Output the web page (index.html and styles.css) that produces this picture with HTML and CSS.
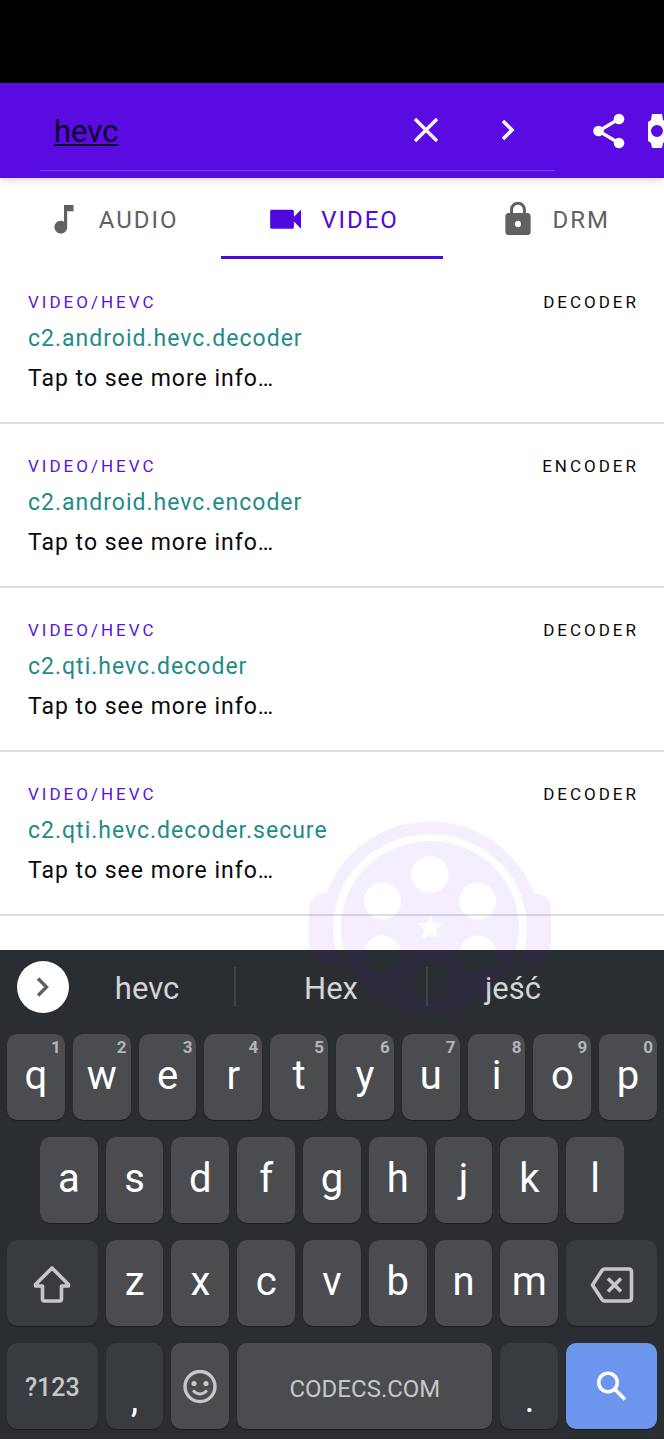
FILE: index.html
```
<!DOCTYPE html>
<html lang="en">
<head>
<meta charset="utf-8">
<meta name="viewport" content="width=device-width, initial-scale=1">
<title>Codec Info</title>
<link rel="stylesheet" href="styles.css">
</head>
<body>
<div class="status-bar"></div>
<header class="app-bar">
  <form class="search">
    <input class="search-input" type="text" value="hevc" aria-label="Search codecs">
    <button class="icon-button" type="button" aria-label="Clear"><svg width="32" height="32" viewBox="0 0 32 32"><path d="M4 4 26 26M26 4 4 26" fill="none" stroke="#fff" stroke-width="3.200"/></svg></button>
    <button class="icon-button" type="submit" aria-label="Submit"><svg width="32" height="32" viewBox="0 0 32 32"><path d="M11 6l9 9-9 9" fill="none" stroke="#fff" stroke-width="3.500"/></svg></button>
  </form>
  <div class="actions">
    <button class="action" type="button" aria-label="Share"><svg width="32" height="36" viewBox="0 0 32 36"><g fill="#fff"><circle cx="5.500" cy="18" r="5.300"/><circle cx="26" cy="6" r="5.300"/><circle cx="26" cy="30" r="5.300"/></g><path d="M26 6 5.500 18 26 30" fill="none" stroke="#fff" stroke-width="3.200"/></svg></button>
    <button class="action" type="button" aria-label="Watch"><svg width="18" height="36" viewBox="0 0 18 36"><path fill="#fff" fill-rule="evenodd" d="M4 1h10l1 6 3 2v19l-3 2-1 5H4l-1-5-3-2V9l3-2zM9 12a6 6 0 1 0 0 12 6 6 0 0 0 0-12z"/></svg></button>
  </div>
</header>
<nav class="tabs">
  <button class="tab" type="button"><svg width="38" height="38" viewBox="0 0 24 24"><path fill="currentColor" d="M12 2.500v10.550c-.59-.34-1.270-.55-2-.55-2.210 0-4 1.790-4 4s1.790 4 4 4 4-1.790 4-4V6.500h4v-4h-6z"/></svg>AUDIO</button>
  <button class="tab tab-active" type="button"><svg width="38" height="38" viewBox="0 0 24 24"><path fill="currentColor" d="M17 10V6.500c0-.55-.45-1-1-1H3c-.55 0-1 .45-1 1v10c0 .55.45 1 1 1h13c.55 0 1-.45 1-1V13l4.500 4.500v-12L17 10z"/></svg>VIDEO</button>
  <button class="tab" type="button"><svg width="38" height="38" viewBox="0 0 24 24"><path fill="currentColor" d="M18 7.500h-1v-2c0-2.760-2.240-5-5-5s-5 2.240-5 5v2H6c-1.100 0-2 .9-2 2v10c0 1.100.9 2 2 2h12c1.100 0 2-.9 2-2v-10c0-1.100-.9-2-2-2zm-6 9c-1.100 0-2-.9-2-2s.9-2 2-2 2 .9 2 2-.9 2-2 2zm3.100-9H8.900v-2c0-1.710 1.390-3.100 3.100-3.100s3.100 1.390 3.100 3.100v2z"/></svg>DRM</button>
</nav>
<main class="codecs">
  <article class="codec">
    <div class="codec-head"><span class="mime">VIDEO/HEVC</span><span>DECODER</span></div>
    <h2 class="codec-name">c2.android.hevc.decoder</h2>
    <p class="codec-hint">Tap to see more info…</p>
  </article>
  <article class="codec">
    <div class="codec-head"><span class="mime">VIDEO/HEVC</span><span>ENCODER</span></div>
    <h2 class="codec-name">c2.android.hevc.encoder</h2>
    <p class="codec-hint">Tap to see more info…</p>
  </article>
  <article class="codec">
    <div class="codec-head"><span class="mime">VIDEO/HEVC</span><span>DECODER</span></div>
    <h2 class="codec-name">c2.qti.hevc.decoder</h2>
    <p class="codec-hint">Tap to see more info…</p>
  </article>
  <article class="codec">
    <div class="codec-head"><span class="mime">VIDEO/HEVC</span><span>DECODER</span></div>
    <h2 class="codec-name">c2.qti.hevc.decoder.secure</h2>
    <p class="codec-hint">Tap to see more info…</p>
  </article>
</main>
<section class="keyboard" aria-label="Keyboard">
  <div class="suggestions">
    <button class="expand" type="button" aria-label="Expand"><svg width="32" height="32" viewBox="0 0 32 32"><path d="M11 7.500 19.500 16 11 24.500" fill="none" stroke="#5f6062" stroke-width="3.400"/></svg></button>
    <button class="suggestion" type="button">hevc</button>
    <button class="suggestion" type="button">Hex</button>
    <button class="suggestion" type="button">jeść</button>
  </div>
  <svg class="reel" width="242" height="192" viewBox="309 822 242 192" aria-hidden="true">
    <g fill="#6200ff" fill-opacity=".068" fill-rule="evenodd">
      <path d="M340 962H327Q309 962 309 944V911Q309 894 326.700 893A109 105 0 0 1 533.300 893Q551 894 551 911V944Q551 962 533 962H520A97 93 0 1 0 340 962Z"/>
      <path d="M341 927a89 86 0 1 0 178 0a89 86 0 1 0-178 0zM411.500 874.500a18.500 18.500 0 1 0 37 0a18.500 18.500 0 1 0-37 0zM364 901a18.500 18.500 0 1 0 37 0a18.500 18.500 0 1 0-37 0zM459 901a18.500 18.500 0 1 0 37 0a18.500 18.500 0 1 0-37 0zM364 954a18.500 18.500 0 1 0 37 0a18.500 18.500 0 1 0-37 0zM459 954a18.500 18.500 0 1 0 37 0a18.500 18.500 0 1 0-37 0zM411.500 981a18.500 18.500 0 1 0 37 0a18.500 18.500 0 1 0-37 0zM430.300 914.500l3.400 8.500 9.600.6-7.300 6 2.400 9.400-8.100-5-8.100 5 2.400-9.400-7.300-6 9.600-.6z"/>
    </g>
  </svg>
  <div class="keys">
    <button class="key" type="button">q<sup class="alt">1</sup></button>
    <button class="key" type="button">w<sup class="alt">2</sup></button>
    <button class="key" type="button">e<sup class="alt">3</sup></button>
    <button class="key" type="button">r<sup class="alt">4</sup></button>
    <button class="key" type="button">t<sup class="alt">5</sup></button>
    <button class="key" type="button">y<sup class="alt">6</sup></button>
    <button class="key" type="button">u<sup class="alt">7</sup></button>
    <button class="key" type="button">i<sup class="alt">8</sup></button>
    <button class="key" type="button">o<sup class="alt">9</sup></button>
    <button class="key" type="button">p<sup class="alt">0</sup></button>
    <button class="key key-indent" type="button">a</button>
    <button class="key" type="button">s</button>
    <button class="key" type="button">d</button>
    <button class="key" type="button">f</button>
    <button class="key" type="button">g</button>
    <button class="key" type="button">h</button>
    <button class="key" type="button">j</button>
    <button class="key" type="button">k</button>
    <button class="key" type="button">l</button>
    <button class="key key-wide key-dark key-icon" type="button" aria-label="Shift"><svg width="40" height="40" viewBox="0 0 40 40"><path d="M20 3 3.500 19.500V21H10.500V34Q10.500 36 12.500 36H27.500Q29.500 36 29.500 34V21H36.500V19.500Z" fill="none" stroke="#c6c7c9" stroke-width="3.600" stroke-linejoin="round"/></svg></button>
    <button class="key" type="button">z</button>
    <button class="key" type="button">x</button>
    <button class="key" type="button">c</button>
    <button class="key" type="button">v</button>
    <button class="key" type="button">b</button>
    <button class="key" type="button">n</button>
    <button class="key" type="button">m</button>
    <button class="key key-wide key-dark key-icon" type="button" aria-label="Backspace"><svg width="44" height="36" viewBox="0 0 44 36"><path d="M2.500 18 12 3.500Q13 2 14.800 2H38.500Q41.500 2 41.500 5V31Q41.500 34 38.500 34H14.800Q13 34 12 32.500ZM18 11.500l13 13M31 11.500l-13 13" fill="none" stroke="#c6c7c9" stroke-width="3.600" stroke-linejoin="round"/></svg></button>
    <button class="key key-wide key-dark key-mode" type="button">?123</button>
    <button class="key key-dark key-punct" type="button">,</button>
    <button class="key key-icon" type="button" aria-label="Emoji"><svg width="36" height="36" viewBox="0 0 36 36"><g fill="none" stroke="#c6c7c9"><circle cx="18" cy="16.500" r="15" stroke-width="3.400"/><path d="M11 20.500q7 7 14 0" stroke-width="3"/></g><g fill="#c6c7c9"><circle cx="12" cy="13.500" r="2.600"/><circle cx="24" cy="13.500" r="2.600"/></g></svg></button>
    <button class="key key-space" type="button">CODECS.COM</button>
    <button class="key key-dark key-punct" type="button">.</button>
    <button class="key key-wide key-search" type="button" aria-label="Search"><svg width="32" height="32" viewBox="0 0 32 32"><g fill="none" stroke="#fff" stroke-width="3.600"><circle cx="12" cy="12.500" r="9.300"/><path d="M18.500 19 29 29.500"/></g></svg></button>
  </div>
</section>
</body>
</html>
```
FILE: styles.css
```
* {
  box-sizing: border-box;
}

body {
  margin: 0;
  background: #fff;
  color: #0a0a0a;
  font-family: Roboto, "Noto Sans", sans-serif;
  overflow-x: hidden;
}

button,
input {
  margin: 0;
  padding: 0;
  border: 0;
  background: none;
  color: inherit;
  font: inherit;
}

svg {
  display: block;
  flex: none;
}

.status-bar {
  height: 83px;
  background: #000;
}

.app-bar {
  display: flex;
  height: 95px;
  padding-left: 40px;
  background: #5a0be2;
  box-shadow: 0 1px 8px rgba(0, 0, 0, 0.2);
}

.search {
  display: flex;
  flex: 1;
  align-items: center;
  min-width: 0;
  height: 88px;
  padding: 9px 7px 0 14px;
  border-bottom: 1px solid #7a3fe8;
}

.search-input {
  flex: 1;
  min-width: 0;
  padding-top: 2px;
  color: #0c0326;
  font-size: 31px;
  line-height: 40px;
  text-decoration: underline;
  text-decoration-thickness: 2px;
  text-underline-offset: 2px;
  outline: 0;
}

.icon-button {
  display: flex;
  justify-content: center;
  width: 81px;
}

.actions {
  display: flex;
  align-items: center;
  gap: 23px;
  width: 109px;
  padding-left: 38px;
  overflow: hidden;
}

.action {
  flex: none;
}

.tabs {
  display: grid;
  grid-template-columns: repeat(3, 1fr);
  height: 82px;
}

.tab {
  display: flex;
  align-items: center;
  justify-content: center;
  gap: 16px;
  margin-bottom: 1px;
  padding-top: 5px;
  padding-left: 2px;
  border-bottom: 3px solid transparent;
  color: #616161;
  font-size: 24px;
  font-weight: 400;
  letter-spacing: 2px;
}

.tab-active {
  border-bottom-color: #4a08dc;
  color: #5008e0;
}

.codecs {
  padding-bottom: 34px;
}

.codec {
  height: 164px;
  padding: 30px 25px 0 28px;
  border-bottom: 2px solid #dedede;
}

.codec-head {
  display: flex;
  justify-content: space-between;
  font-size: 17px;
  line-height: 24px;
  letter-spacing: 3px;
}

.mime {
  color: #5a14e0;
}

.codec-name,
.codec-hint {
  margin: 0;
  font-size: 23px;
  font-weight: 400;
  line-height: 40px;
  letter-spacing: 1px;
}

.codec-name {
  margin-top: 5px;
  color: #1f8b88;
}

.keyboard {
  position: relative;
  padding-bottom: 10px;
  background: #2a2d31;
}

.suggestions {
  display: grid;
  grid-template-columns: 60px 174fr 192fr 172fr 66px;
  align-items: center;
  height: 84px;
  padding-bottom: 11px;
}

.expand {
  display: flex;
  align-items: center;
  justify-content: center;
  width: 52px;
  height: 52px;
  margin-left: 17px;
  border-radius: 50%;
  background: #fff;
}

.suggestion {
  height: 40px;
  padding-top: 4px;
  color: #d4d5d7;
  font-size: 31px;
  line-height: 36px;
}

.suggestion + .suggestion {
  border-left: 2px solid #3e4145;
}

.reel {
  position: absolute;
  top: -128px;
  left: 46.5%;
  pointer-events: none;
}

.keys {
  display: grid;
  grid-template-columns: repeat(20, 1fr);
  grid-auto-rows: 86px;
  gap: 17px 8px;
  padding: 0 7px;
}

.key {
  display: flex;
  position: relative;
  grid-column: span 2;
  align-items: center;
  justify-content: center;
  padding-bottom: 4px;
  border-radius: 10px;
  background: #4b4c4f;
  box-shadow: 0 1px 1px rgba(0, 0, 0, 0.35);
  color: #fff;
  font-size: 40px;
}

.alt {
  position: absolute;
  top: 2px;
  right: 4px;
  color: #b4b5b7;
  font-size: 17px;
  font-weight: 700;
  line-height: 22px;
}

.key-indent {
  grid-column: 2 / span 2;
}

.key-wide {
  grid-column: span 3;
}

.key-dark {
  background: #383b3f;
}

.key-icon {
  padding: 4px 0 0;
}

.key-mode {
  padding: 3px 0 0;
  color: #c6c7c9;
  font-size: 25px;
  font-weight: 500;
}

.key-punct {
  align-items: flex-end;
  padding-bottom: 8px;
  font-size: 36px;
}

.key-space {
  grid-column: span 8;
  padding: 6px 0 0;
  color: #c6c7c9;
  font-size: 24px;
}

.key-search {
  padding: 0;
  background: #6c96ee;
}
```
